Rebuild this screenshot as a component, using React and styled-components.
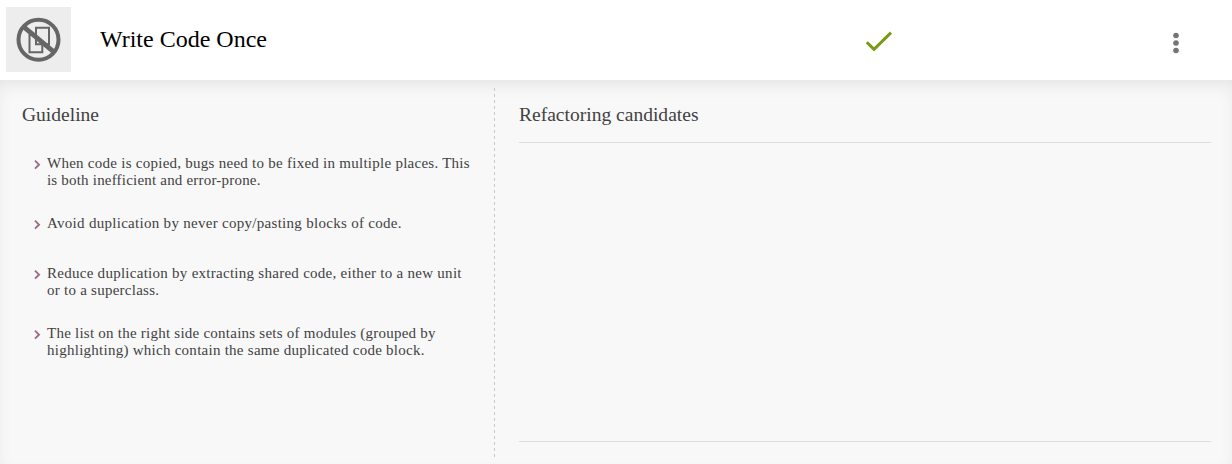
import React from "react";
import styled, { createGlobalStyle } from "styled-components";

const GlobalStyle = createGlobalStyle`
  * { box-sizing: border-box; }
  body { margin: 0; background: #fff; font-family: "Liberation Serif", "Times New Roman", serif; }
  h1, h2, ul { margin: 0; padding: 0; font-weight: 400; }
`;

const Page = styled.div`
  display: flex;
  flex-direction: column;
  width: 1232px;
  height: 464px;
  overflow: hidden;
`;

const Header = styled.header`
  display: flex;
  align-items: flex-start;
  height: 80px;
  padding: 7px 44px 0 6px;
`;

const Thumb = styled.div`
  display: flex;
  width: 65px;
  height: 65px;
  background: #ededed;
`;

const Title = styled.h1`
  width: 763px;
  margin: 18px 0 0 29px;
  font-size: 24px;
  line-height: 28px;
  color: #000;
`;

const StatusIcon = styled.svg`
  width: 30px;
  height: 24px;
  margin-top: 24px;
`;

const MenuButton = styled.button`
  display: flex;
  margin: 24px 0 0 auto;
  padding: 0;
  border: 0;
  background: none;
`;

const Body = styled.main`
  display: flex;
  height: 384px;
  padding: 8px 21px 5px 22px;
  background: #f8f8f8;
  box-shadow: inset 0 8px 18px -5px rgba(0, 0, 0, 0.09);
`;

const Guideline = styled.section`
  width: 472px;
`;

const Divider = styled.div`
  width: 1px;
  background: repeating-linear-gradient(to bottom, #c8c8c8 0 3px, transparent 3px 6px);
`;

const Heading = styled.h2`
  padding-top: 15px;
  font-size: 19.55px;
  line-height: 23px;
  color: #424242;
`;

const List = styled.ul`
  padding: 29px 0 0 12px;
  list-style: none;
`;

const Item = styled.li`
  display: flex;
  align-items: flex-start;
  min-height: 34px;
  margin-bottom: ${(p) => p.$gap}px;
  font-size: 15px;
  line-height: 17px;
  color: #424242;
`;

const Line = styled.span`
  display: block;
  letter-spacing: ${(p) => p.$tracking}px;
  white-space: nowrap;
`;

const Chevron = styled.svg`
  width: 8px;
  height: 12px;
  margin: 4px 5px 0 0;
  flex: none;
`;

const Candidates = styled.section`
  display: flex;
  flex-direction: column;
  flex: 1;
  margin: 0 0 17px 24px;
`;

const Results = styled.div`
  flex: 1;
  margin-top: 16px;
  border: solid #dedede;
  border-width: 1px 0;
`;

const GUIDES = [
  {
    gap: 26,
    lines: [
      ["When code is copied, bugs need to be fixed in multiple places. This", 0.26],
      ["is both inefficient and error-prone.", 0.2],
    ],
  },
  { gap: 16, lines: [["Avoid duplication by never copy/pasting blocks of code.", 0.29]] },
  {
    gap: 26,
    lines: [
      ["Reduce duplication by extracting shared code, either to a new unit", 0.27],
      ["or to a superclass.", 0.25],
    ],
  },
  {
    gap: 0,
    lines: [
      ["The list on the right side contains sets of modules (grouped by", 0.24],
      ["highlighting) which contain the same duplicated code block.", 0.26],
    ],
  },
];

const NoDuplicatesIcon = () => (
  <svg width="65" height="65" viewBox="0 0 65 65" fill="none" stroke="#666">
    <path d="M30 20.8H43V37.2H30Z M30 28H23.5V45.2H36.3V37" strokeWidth="2" />
    <circle cx="32.5" cy="32.7" r="20" strokeWidth="4" />
    <path d="M18 20.2L47.5 44.7" strokeWidth="4.8" />
  </svg>
);

export default function App() {
  return (
    <>
      <GlobalStyle />
      <Page>
        <Header>
          <Thumb><NoDuplicatesIcon /></Thumb>
          <Title>Write Code Once</Title>
          <StatusIcon viewBox="0 0 30 24" fill="none" stroke="#7a9a17" strokeWidth="3">
            <path d="M3.8 11.2L11 18.4L28 1.6" />
          </StatusIcon>
          <MenuButton aria-label="More options">
            <svg width="24" height="24" viewBox="0 0 24 24" fill="#757575">
              <circle cx="12" cy="4.5" r="2.8" />
              <circle cx="12" cy="12" r="2.8" />
              <circle cx="12" cy="19.5" r="2.8" />
            </svg>
          </MenuButton>
        </Header>
        <Body>
          <Guideline>
            <Heading>Guideline</Heading>
            <List>
              {GUIDES.map(({ gap, lines }) => (
                <Item key={lines[0][0]} $gap={gap}>
                  <Chevron viewBox="0 0 8 12" fill="none" stroke="#9b6c8a" strokeWidth="1.9">
                    <path d="M1 1.7L5 5.7L1 9.7" />
                  </Chevron>
                  <div>
                    {lines.map(([text, tracking]) => (
                      <Line key={text} $tracking={tracking}>{text}</Line>
                    ))}
                  </div>
                </Item>
              ))}
            </List>
          </Guideline>
          <Divider />
          <Candidates>
            <Heading>Refactoring candidates</Heading>
            <Results />
          </Candidates>
        </Body>
      </Page>
    </>
  );
}
